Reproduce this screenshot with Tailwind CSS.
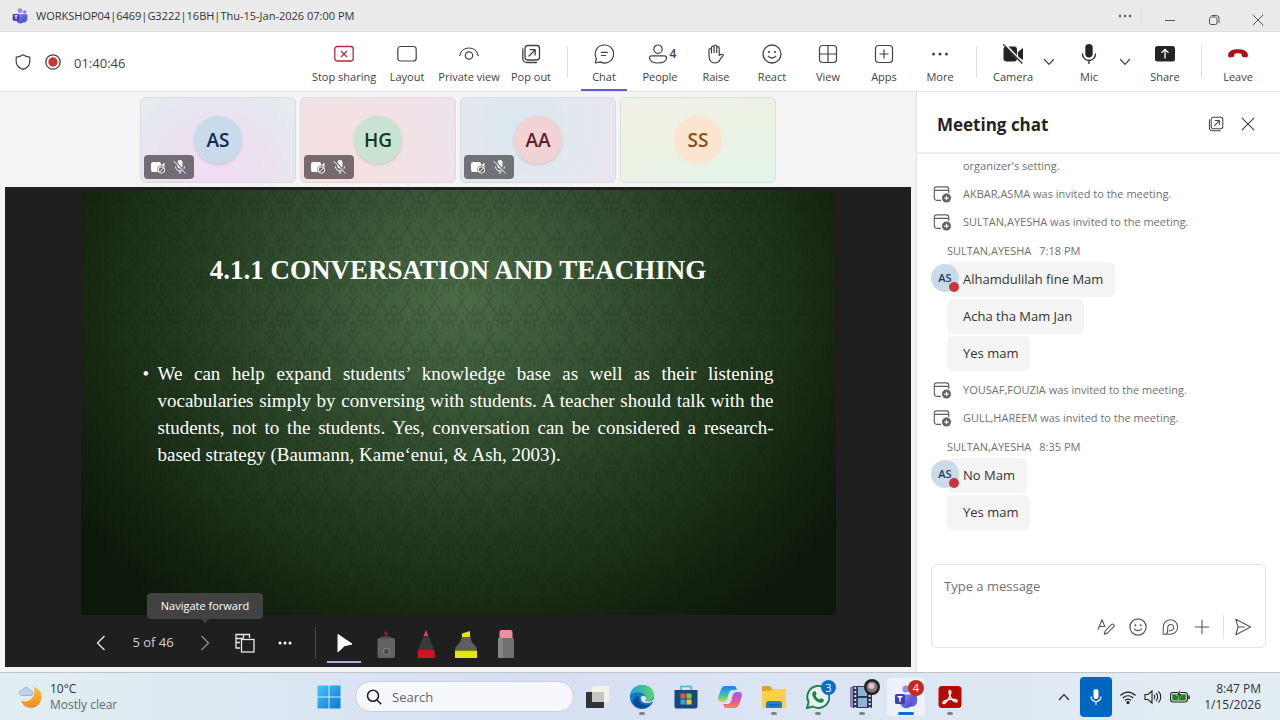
<!DOCTYPE html>
<html lang="en">
<head>
<meta charset="utf-8">
<meta name="viewport" content="width=device-width, initial-scale=1">
<title>Meeting</title>
<script src="https://cdn.jsdelivr.net/npm/@tailwindcss/browser@4"></script>
</head>
<body class="flex h-screen flex-col overflow-hidden bg-[#f4f4f4] font-['Open_Sans','Noto_Sans',sans-serif] text-[#424242]">

<svg width="0" height="0" class="absolute" aria-hidden="true">
  <defs>
    <linearGradient id="tm" x1="0" y1="0" x2="1" y2="1"><stop offset="0" stop-color="#8a8ff5"/><stop offset="1" stop-color="#4a3fc4"/></linearGradient>
    <symbol id="teams" viewBox="0 0 24 24">
      <circle cx="19" cy="6" r="2.6" fill="#7b83eb"/><circle cx="12" cy="4" r="3.6" fill="#8b90f0"/>
      <path d="M16 9.5h5.2c1 0 1.8.8 1.8 1.800v5.500a5 5 0 0 1-7 4.400z" fill="#5b5fd6"/>
      <path d="M7 9.500h10a1.500 1.500 0 0 1 1.500 1.500v6a6 6 0 0 1-12.500 0v-6.500a1 1 0 0 1 1-1z" fill="url(#tm)"/>
      <rect x="1" y="9" width="10" height="10" rx="1.800" fill="#3d3db4"/>
      <path d="M3.500 11.700h5M6 11.700v5" stroke="#fff" stroke-width="1.500" fill="none"/>
    </symbol>
    <symbol id="popout" viewBox="0 0 20 20">
      <g fill="none" stroke="currentColor" stroke-width="1.300" stroke-linecap="round" stroke-linejoin="round">
      <rect x="4" y="1.500" width="14.500" height="14.500" rx="2.800"/><path d="M1.800 4.800v9.700a4 4 0 0 0 4 4h9.700M8 12l6-6M9 5.700h5.200v5.200"/></g>
    </symbol>
    <symbol id="smile" viewBox="0 0 20 20">
      <circle cx="10" cy="10" r="9" fill="none" stroke="currentColor" stroke-width="1.300"/><circle cx="7" cy="8" r="1.100" fill="currentColor"/><circle cx="13" cy="8" r="1.100" fill="currentColor"/><path d="M6.200 12.200c1.800 2.400 5.800 2.400 7.600 0" fill="none" stroke="currentColor" stroke-width="1.300" stroke-linecap="round"/>
    </symbol>
    <symbol id="chev" viewBox="0 0 12 12"><path d="M1.500 3.500L6 8.300l4.500-4.800" fill="none" stroke="currentColor" stroke-width="1.200" stroke-linecap="round"/></symbol>
    <symbol id="close" viewBox="0 0 12 12"><path d="M.7.700l10.600 10.600M11.300.700L.7 11.300" fill="none" stroke="currentColor" stroke-width="1"/></symbol>
    <symbol id="invite" viewBox="0 0 20 20">
      <path d="M9 17H4A2.500 2.500 0 0 1 1.500 14.500v-10A2.500 2.500 0 0 1 4 2h11a2.500 2.500 0 0 1 2.500 2.500V9M1.500 6h16" fill="none" stroke="currentColor" stroke-width="1.300"/>
      <circle cx="15" cy="14.500" r="5" fill="currentColor"/><path d="M15 12v5M12.500 14.500h5" stroke="#fff" stroke-width="1.300"/>
    </symbol>
    <symbol id="camblock" viewBox="0 0 16 16">
      <rect x="1" y="3" width="10" height="10" rx="2" fill="#fff"/><path d="M11.500 6l3-2.300v6z" fill="#fff"/>
      <circle cx="11.500" cy="11" r="4.200" fill="#6b646b"/><circle cx="11.500" cy="11" r="3.200" fill="none" stroke="#fff"/><path d="M9.300 13.200l4.400-4.400" stroke="#fff"/>
    </symbol>
    <symbol id="micoff" viewBox="0 0 16 16">
      <rect x="5.500" y="1" width="5" height="8.500" rx="2.500" fill="#fff"/><path d="M3.500 7.500a4.500 4.500 0 0 0 9 0M8 12v3" stroke="#fff" fill="none"/>
      <path d="M2.500 1.500l12 13" stroke="#6b646b" stroke-width="1.600"/><path d="M1.700 2l12 12.500" stroke="#fff"/>
    </symbol>
  </defs>
</svg>

<header class="flex h-8 shrink-0 items-center border-b border-[#dfdfda] bg-[#eaeaea] pl-3">
  <svg class="size-4" aria-hidden="true"><use href="#teams"/></svg>
  <h1 class="ml-2 pt-0.5 text-[11px] text-[#333]">WORKSHOP04|6469|G3222|16BH|Thu-15-Jan-2026 07:00 PM</h1>
  <div class="ml-auto flex h-full items-center text-[#555]">
    <button aria-label="More options" class="flex h-full w-8 items-center justify-center"><svg class="h-1 w-4" viewBox="0 0 16 4" fill="currentColor"><circle cx="3" cy="2" r="1.200"/><circle cx="8" cy="2" r="1.200"/><circle cx="13" cy="2" r="1.200"/></svg></button>
    <span class="mr-1.5 h-4 w-px bg-[#dcdcdc]"></span>
    <button aria-label="Minimize" class="flex h-full w-11 items-center justify-center pt-2"><svg class="size-3" viewBox="0 0 12 12"><path d="M1 6.500h10" stroke="currentColor"/></svg></button>
    <button aria-label="Restore" class="flex h-full w-11 items-center justify-center pt-2"><svg class="size-3" viewBox="0 0 12 12" fill="none" stroke="currentColor"><rect x="1.500" y="3" width="7.500" height="7.500" rx="1.500"/><path d="M3.500 1.500h5a2.500 2.500 0 0 1 2.500 2.500v5"/></svg></button>
    <button aria-label="Close" class="flex h-full w-11 items-center justify-center pt-2"><svg class="size-3"><use href="#close"/></svg></button>
  </div>
</header>

<nav aria-label="Meeting controls" class="flex h-15 shrink-0 border-b border-[#e3e3e3] bg-white pr-3.5 pl-[15px] text-[11px] leading-4">
  <div class="flex items-center gap-3">
    <svg class="size-4" viewBox="0 0 16 16" fill="none" stroke="#424242" stroke-width="1.200" stroke-linejoin="round"><path d="M8 .8c2 1.500 4 2.200 6.800 2.400v4.300c0 3.800-2.500 6.300-6.800 7.900-4.300-1.600-6.800-4.100-6.800-7.900V3.200C4 3 6 2.300 8 .8z"/></svg>
    <svg class="ml-0.5 size-4" viewBox="0 0 16 16"><circle cx="8" cy="8" r="7.200" fill="none" stroke="#424242" stroke-width="1.300"/><circle cx="8" cy="8" r="4.700" fill="#d13438"/></svg>
    <time class="pt-0.5 pl-px text-[13px]">01:40:46</time>
  </div>
  <div class="ml-auto flex">
    <button class="flex w-18 flex-col items-center gap-[5px] whitespace-nowrap pt-3"><svg class="size-5" viewBox="0 0 20 20" fill="none" stroke="#b52a3a" stroke-width="1.300"><rect x=".8" y="2.500" width="18.400" height="14.500" rx="2.500"/><path d="M7 7l6 6M13 7l-6 6"/></svg><span>Stop sharing</span></button>
    <button class="flex w-13.5 flex-col items-center gap-[5px] pt-3"><svg class="size-5" viewBox="0 0 20 20" fill="none" stroke="currentColor" stroke-width="1.200"><rect x=".8" y="2.500" width="18.400" height="14.500" rx="2.800"/></svg><span>Layout</span></button>
    <button class="flex w-17.5 flex-col items-center gap-[5px] whitespace-nowrap pt-3"><svg class="size-5" viewBox="0 0 20 20" fill="none" stroke="currentColor" stroke-width="1.200" stroke-linecap="round"><path d="M.8 11.500C2.500 1.500 17.500 1.500 19.200 11.500"/><circle cx="10" cy="11.500" r="3.700"/></svg><span>Private view</span></button>
    <button class="flex w-13.5 flex-col items-center gap-[5px] whitespace-nowrap pt-3"><svg class="size-5"><use href="#popout"/></svg><span>Pop out</span></button>
    <div class="flex w-4.5 items-center justify-center"><span class="h-8 w-px bg-[#dedede]"></span></div>
    <button class="relative flex w-14 flex-col items-center gap-[5px] pt-3"><svg class="size-5" viewBox="0 0 20 20" fill="none" stroke="currentColor" stroke-width="1.200" stroke-linecap="round" stroke-linejoin="round"><path d="M10.500 1a9 9 0 1 1-4.200 16.900L1.300 19l1.100-4.500A9 9 0 0 1 10.500 1z"/><path d="M7.500 8.300h6M7.500 11.500h4"/></svg><span>Chat</span><span class="absolute bottom-0 h-0.5 w-11.5 bg-[#5b5fc7]"></span></button>
    <button class="flex w-14 flex-col items-center gap-[5px] pt-3"><span class="flex h-5 items-center gap-0.5 pl-1 text-[12px] font-semibold"><svg class="size-5" viewBox="0 0 20 20" fill="none" stroke="currentColor" stroke-width="1.200"><circle cx="10" cy="5.200" r="4.200"/><path d="M3.500 11.800h13a2 2 0 0 1 2 2c0 3.500-3.500 5.200-8.500 5.200s-8.500-1.700-8.500-5.200a2 2 0 0 1 2-2z"/></svg>4</span><span>People</span></button>
    <button class="flex w-14 flex-col items-center gap-[5px] pt-3"><svg class="size-5" viewBox="0 0 20 20" fill="none" stroke="currentColor" stroke-width="1.200" stroke-linecap="round" stroke-linejoin="round"><path d="M3 11V5.800a1.200 1.200 0 0 1 2.500 0V9 3.500a1.300 1.300 0 0 1 2.600 0V8.500 2.300a1.300 1.300 0 0 1 2.600 0V8.500 3.800a1.200 1.200 0 0 1 2.500 0V11.500c1-.8 2.200-1.400 3.600-1 .8.300.6 1 .1 1.400-1.300.9-2 2.300-3 4.100-1 2-2.400 3-5 3C5 19 3 16 3 11z"/></svg><span>Raise</span></button>
    <button class="flex w-14 flex-col items-center gap-[5px] pt-3"><svg class="size-5"><use href="#smile"/></svg><span>React</span></button>
    <button class="flex w-14 flex-col items-center gap-[5px] pt-3"><svg class="size-5" viewBox="0 0 20 20" fill="none" stroke="currentColor" stroke-width="1.200"><rect x="1.500" y="1.500" width="17" height="17" rx="3"/><path d="M10 1.500v17M1.500 10h17"/></svg><span>View</span></button>
    <button class="flex w-14 flex-col items-center gap-[5px] pt-3"><svg class="size-5" viewBox="0 0 20 20" fill="none" stroke="currentColor" stroke-width="1.200"><rect x="1.500" y="1.500" width="17" height="17" rx="3"/><path d="M10 5.500v9M5.500 10h9"/></svg><span>Apps</span></button>
    <button class="flex w-14 flex-col items-center gap-[5px] pt-3"><svg class="size-5" viewBox="0 0 20 20" fill="currentColor"><circle cx="3.500" cy="10" r="1.500"/><circle cx="10" cy="10" r="1.500"/><circle cx="16.500" cy="10" r="1.500"/></svg><span>More</span></button>
    <div class="flex w-[17px] items-center justify-center"><span class="h-8 w-px bg-[#dedede]"></span></div>
    <button class="flex w-14 flex-col items-center gap-[5px] pt-3"><svg class="size-5" viewBox="0 0 20 20"><rect x=".5" y="2.500" width="13.500" height="15" rx="3" fill="#242424"/><path d="M15 8l4-3.500q1-.5 1 .5v10q0 1-1 .5l-4-3z" fill="#242424"/><path d="M1.500 0l18.500 19.500" stroke="#fff" stroke-width="2.500"/><path d="M.3.500l19 19" stroke="#242424" stroke-width="1.300"/></svg><span>Camera</span></button>
    <button aria-label="Camera options" class="flex w-4 items-center justify-center"><svg class="size-3"><use href="#chev"/></svg></button>
    <button class="ml-1 flex w-14 flex-col items-center gap-[5px] pt-3"><svg class="size-5" viewBox="0 0 20 20"><rect x="6.300" y="0" width="7.400" height="13.500" rx="3.700" fill="#242424"/><path d="M3.500 9.500v.5a6.500 6.500 0 0 0 13 0v-.5M10 16.500V20" fill="none" stroke="#242424" stroke-width="1.300"/></svg><span>Mic</span></button>
    <button aria-label="Mic options" class="flex w-4 items-center justify-center"><svg class="size-3"><use href="#chev"/></svg></button>
    <button class="ml-1 flex w-14 flex-col items-center gap-[5px] pt-3"><svg class="size-5" viewBox="0 0 20 20"><rect x="0" y="2" width="20" height="15.500" rx="2.500" fill="#242424"/><path d="M10 14.500V5.500M6.500 8.800L10 5.300l3.500 3.500" stroke="#fff" stroke-width="1.300" fill="none"/></svg><span>Share</span></button>
    <div class="flex w-[17px] items-center justify-center"><span class="h-8 w-px bg-[#dedede]"></span></div>
    <button class="flex w-14 flex-col items-center gap-[5px] pt-3"><svg class="size-5" viewBox="0 0 20 20"><path d="M10 5.300c5.500 0 9.500 1.800 9.900 5.500.2 1.800-.6 2.900-2.100 2.600l-2.600-.5c-1-.2-1.500-.8-1.600-2l-.1-1.100c-2.200-.8-4.800-.8-7 0l-.1 1.100c-.1 1.200-.6 1.800-1.600 2l-2.600.5C.7 13.700-.1 12.600.1 10.800.5 7.100 4.500 5.300 10 5.300z" fill="#b10e1c"/></svg><span>Leave</span></button>
  </div>
</nav>

<main class="flex min-h-0 flex-1">
  <section aria-label="Shared content" class="flex min-w-0 flex-1 flex-col px-[5px] pb-[5px]">
    <ul class="flex shrink-0 justify-center gap-1 pt-[5px] pb-1">
      <li class="relative flex h-[86px] w-39 items-center justify-center rounded-md border border-[#dcdce0] bg-[radial-gradient(circle_at_50%_100%,#f3dcf5_0%,#ebe0ef_40%,#e5eaee_85%,#e4efee_100%)]">
        <span class="flex size-12 items-center justify-center rounded-full bg-[#c9dbea] text-[19px] font-semibold text-[#102a52] shadow-sm">AS</span>
        <span class="absolute bottom-[3px] left-[3px] flex h-6 w-[50px] items-center justify-center gap-1.5 rounded bg-[#736b76]"><svg class="size-4"><use href="#camblock"/></svg><svg class="size-4"><use href="#micoff"/></svg></span>
      </li>
      <li class="relative flex h-[86px] w-39 items-center justify-center rounded-md border border-[#e2d8de] bg-[radial-gradient(circle_at_25%_80%,#f6dee0_0%,#f2e1e4_45%,#ece2ee_100%)]">
        <span class="flex size-12 items-center justify-center rounded-full bg-[#cae3d2] text-[19px] font-semibold text-[#0f3d1c] shadow-sm">HG</span>
        <span class="absolute bottom-[3px] left-[3px] flex h-6 w-[50px] items-center justify-center gap-1.5 rounded bg-[#766a6e]"><svg class="size-4"><use href="#camblock"/></svg><svg class="size-4"><use href="#micoff"/></svg></span>
      </li>
      <li class="relative flex h-[86px] w-39 items-center justify-center rounded-md border border-[#d8dde2] bg-[radial-gradient(circle_at_40%_35%,#d9e6ee_0%,#e2e8ee_50%,#ebe5ee_100%)]">
        <span class="flex size-12 items-center justify-center rounded-full bg-[#f3d2d4] text-[19px] font-semibold text-[#5c1f2d] shadow-sm">AA</span>
        <span class="absolute bottom-[3px] left-[3px] flex h-6 w-[50px] items-center justify-center gap-1.5 rounded bg-[#6f7276]"><svg class="size-4"><use href="#camblock"/></svg><svg class="size-4"><use href="#micoff"/></svg></span>
      </li>
      <li class="relative flex h-[86px] w-39 items-center justify-center rounded-md border border-[#d9e2da] bg-linear-160 from-[#f3efe5] via-[#ebf2e3] to-[#dff5e8]">
        <span class="flex size-12 items-center justify-center rounded-full bg-[#fbe5d0] text-[19px] font-semibold text-[#835216]">SS</span>
      </li>
    </ul>
    <div class="flex min-h-0 flex-1 flex-col items-center bg-[#201f1f] pt-[3px]">
      <article class="relative flex min-h-0 w-5/6 flex-1 flex-col overflow-hidden bg-[radial-gradient(ellipse_62%_95%_at_50%_25%,#4b6b46_0%,#395736_25%,#253d22_55%,#172812_80%,#0c180a_100%)] px-[62px] font-['Liberation_Serif',serif] text-white">
        <svg class="absolute inset-0 size-full" aria-hidden="true">
          <defs><pattern id="damask" width="32" height="44" patternUnits="userSpaceOnUse" patternTransform="scale(.85)">
            <g fill="none" stroke="#0a180c" stroke-opacity=".16" stroke-width="2"><path d="M16 3c5 6 5 8 0 13-5-5-5-7 0-13zM16 16c7-5 12 0 9 5-2 3-6 1-5-2M16 16c-7-5-12 0-9 5 2 3 6 1 5-2M16 18v16M16 24c5-2 8 3 4 7M16 24c-5-2-8 3-4 7M0 22c4 5 4 9 0 14M32 22c-4 5-4 9 0 14M0 0c3 7 8 9 10 16M32 0c-3 7-8 9-10 16M0 44c3-5 3-7 9-9M32 44c-3-5-3-7-9-9"/></g>
          </pattern></defs>
          <rect width="100%" height="100%" fill="url(#damask)"/>
        </svg>
        <h2 class="relative mt-[64px] text-center text-[27px] leading-8 font-bold whitespace-nowrap">4.1.1 CONVERSATION AND TEACHING</h2>
        <ul class="relative mt-[74px] pl-[15px] text-[19px] leading-[27px]">
          <li class="text-justify before:absolute before:left-0 before:content-['•']">We can help expand students’ knowledge base as well as their listening vocabularies simply by conversing with students. A teacher should talk with the students, not to the students. Yes, conversation can be considered a research-based strategy (Baumann, Kame‘enui, &amp; Ash, 2003).</li>
        </ul>
      </article>
      <div class="relative flex h-[52px] w-full shrink-0 items-center pt-1 pl-20 text-[#e8e8e8]">
        <button aria-label="Navigate back" class="flex w-8 justify-center"><svg class="h-4 w-3" viewBox="0 0 12 16"><path d="M9.500 1L2.500 8l7 7" fill="none" stroke="currentColor" stroke-width="1.300"/></svg></button>
        <span class="w-18 text-center text-[13px] whitespace-nowrap text-[#d0d0d0]">5 of 46</span>
        <button aria-label="Navigate forward" aria-describedby="tip" class="relative flex w-8 justify-center text-[#8f8f93]"><svg class="h-4 w-3" viewBox="0 0 12 16"><path d="M2.500 1l7 7-7 7" fill="none" stroke="currentColor" stroke-width="1.300"/></svg>
          <span id="tip" role="tooltip" class="absolute bottom-8 left-1/2 flex h-[26px] w-29 -translate-x-1/2 items-center justify-center rounded bg-[#424242] text-[11px] whitespace-nowrap text-white after:absolute after:top-full after:size-0 after:border-4 after:border-b-0 after:border-transparent after:border-t-[#424242]">Navigate forward</span></button>
        <button aria-label="Grid view" class="ml-2 flex w-8 justify-center"><svg class="size-5" viewBox="0 0 20 20" fill="none" stroke="currentColor" stroke-width="1.300"><rect x="6.500" y="6.500" width="12.500" height="12.500"/><path d="M8.500 5.500V1.500H1v13.500h4M1 5.500h7M9 1.500h5.500V5M1 9.500h4"/></svg></button>
        <button aria-label="More actions" class="ml-2 flex w-8 justify-center"><svg class="h-1 w-4" viewBox="0 0 16 4" fill="#fff"><circle cx="3" cy="2" r="1.500"/><circle cx="8" cy="2" r="1.500"/><circle cx="13" cy="2" r="1.500"/></svg></button>
        <span class="mx-3.5 h-8 w-px bg-[#4d4d4d]"></span>
        <button aria-label="Cursor" class="relative flex h-full w-7 items-center justify-center"><svg class="size-5" viewBox="0 0 20 20"><path d="M4 1.500l14 9.500-7.500 1.700L4 19z" fill="#fff" stroke="#fff" stroke-linejoin="round"/></svg><span class="absolute bottom-1 h-0.5 w-8.5 bg-[#b3addc]"></span></button>
        <button aria-label="Laser pointer" class="ml-3.5 flex w-7 justify-center pt-0.5"><svg class="h-8 w-6" viewBox="0 0 24 32"><circle cx="12" cy="5.500" r="2" fill="#8c1d26"/><path d="M12 7v3" stroke="#6c1d26" stroke-width="2"/><rect x="3.500" y="10" width="17.500" height="20" rx="2" fill="#636363"/><rect x="7" y="8.500" width="10" height="2" fill="#4d4d4d"/><circle cx="12.500" cy="23.500" r="3.200" fill="#4a4a4a" stroke="#8d8d8d"/></svg></button>
        <button aria-label="Pen" class="ml-3 flex w-7 justify-center pt-0.5"><svg class="h-8 w-6" viewBox="0 0 24 32"><path d="M9.500 8.500q2.500-2 5 0c3 6 5 10 5.500 15H4c.5-5 2.500-9 5.500-15z" fill="#3a3a3a"/><path d="M12 2l2.500 6h-5z" fill="#e0414b"/><path d="M4 22h16.500l.5 8H3.500z" fill="#c8161f"/></svg></button>
        <button aria-label="Highlighter" class="ml-3 flex w-7 justify-center pt-0.5"><svg class="h-8 w-6" viewBox="0 0 24 32"><path d="M8 5.500L16 3v6.500H8z" fill="#e3e31c"/><path d="M7.500 9h9q0 4 3 7 3 2 3.500 6H1q.5-4 3.500-6 3-3 3-7z" fill="#5e5e5e"/><path d="M1 22.500h22V30H1z" fill="#e6e60f"/></svg></button>
        <button aria-label="Eraser" class="ml-3 flex w-7 justify-center pt-0.5"><svg class="h-8 w-6" viewBox="0 0 24 32"><rect x="5.500" y="2" width="13" height="10" rx="2" fill="#ee8e99"/><rect x="4" y="10" width="16" height="20" rx="1" fill="#717171"/><path d="M4 10h5v20H4z" fill="#858585"/></svg></button>
      </div>
    </div>
  </section>

  <aside aria-label="Meeting chat" class="flex w-91 shrink-0 flex-col border-l border-[#e0e0e0] bg-white">
    <header class="flex h-[62px] shrink-0 items-center border-b-2 border-[#efefef] pt-1 pr-[25px] pl-5">
      <h2 class="pt-px text-[17px] font-bold text-[#242424]">Meeting chat</h2>
      <button aria-label="Pop out chat" class="ml-auto"><svg class="size-4"><use href="#popout"/></svg></button>
      <button aria-label="Close chat" class="ml-[17px]"><svg class="size-3.5"><use href="#close"/></svg></button>
    </header>
    <div class="min-h-0 flex-1 overflow-hidden pl-3.5 text-[11px] text-[#707070]">
      <p class="-mt-0.5 flex h-7 items-center pl-8">organizer's setting.</p>
      <p class="flex h-7 items-center gap-3"><svg class="ml-0.5 size-4.5 text-[#616161]"><use href="#invite"/></svg>AKBAR,ASMA was invited to the meeting.</p>
      <p class="flex h-7 items-center gap-3"><svg class="ml-0.5 size-4.5 text-[#616161]"><use href="#invite"/></svg>SULTAN,AYESHA was invited to the meeting.</p>
      <p class="flex h-[26px] items-center gap-2 pt-1 pl-4"><span>SULTAN,AYESHA</span><time>7:18 PM</time></p>
      <div class="relative flex flex-col items-start gap-0.5 pl-4 text-[13px] text-[#333]">
        <p class="flex h-[35px] items-center rounded-md bg-[#f4f4f4] pr-3 pl-4">Alhamdulilah fine Mam</p>
        <p class="flex h-[35px] items-center rounded-md bg-[#f4f4f4] pr-3 pl-4">Acha tha Mam Jan</p>
        <p class="flex h-[35px] items-center rounded-md bg-[#f4f4f4] pr-3 pl-4">Yes mam</p>
        <span class="absolute top-0.5 left-0 flex size-7 items-center justify-center rounded-full bg-[#c9dbea] text-[11px] font-semibold text-[#1d3a5f]">AS<i class="absolute right-0 bottom-0 size-2.5 rounded-full bg-[#c9353b]"></i></span>
      </div>
      <p class="mt-[5px] flex h-7 items-center gap-3"><svg class="ml-0.5 size-4.5 text-[#616161]"><use href="#invite"/></svg>YOUSAF,FOUZIA was invited to the meeting.</p>
      <p class="flex h-7 items-center gap-3"><svg class="ml-0.5 size-4.5 text-[#616161]"><use href="#invite"/></svg>GULL,HAREEM was invited to the meeting.</p>
      <p class="flex h-[26px] items-center gap-2 pt-1 pl-4"><span>SULTAN,AYESHA</span><time>8:35 PM</time></p>
      <div class="relative flex flex-col items-start gap-0.5 pl-4 text-[13px] text-[#333]">
        <p class="flex h-[35px] items-center rounded-md bg-[#f4f4f4] pr-3 pl-4">No Mam</p>
        <p class="flex h-[35px] items-center rounded-md bg-[#f4f4f4] pr-3 pl-4">Yes mam</p>
        <span class="absolute top-0.5 left-0 flex size-7 items-center justify-center rounded-full bg-[#c9dbea] text-[11px] font-semibold text-[#1d3a5f]">AS<i class="absolute right-0 bottom-0 size-2.5 rounded-full bg-[#c9353b]"></i></span>
      </div>
    </div>
    <form class="mr-3.5 mb-6 ml-3.5 flex h-21 shrink-0 flex-col rounded-md border border-[#e2e2e2]">
      <input type="text" aria-label="Type a message" placeholder="Type a message" class="h-[42px] w-full px-3 text-[13px] outline-none placeholder:text-[#707070]">
      <div class="flex h-10 items-center justify-end gap-3.5 pr-[13px] text-[#555]">
        <button type="button" aria-label="Format"><svg class="size-4.5" viewBox="0 0 20 20" fill="none" stroke="currentColor" stroke-width="1.200" stroke-linejoin="round"><path d="M1 13L5.500 2 9 10M2.500 9.500h5.500M8 18l1-3.500 7-7.200a1.700 1.700 0 0 1 2.500 2.500l-7 7z"/></svg></button>
        <button type="button" aria-label="Emoji"><svg class="size-4.5"><use href="#smile"/></svg></button>
        <button type="button" aria-label="Loop"><svg class="size-4.5" viewBox="0 0 20 20" fill="none" stroke="currentColor" stroke-width="1.200" stroke-linejoin="round"><path d="M2.500 18V10A8 8 0 1 1 10.500 18zM6 18c1.500-2 1.500-5 1.500-7.500a3.300 3.300 0 1 1 3.300 3.300c-1.500 0-2 .2-2 1.200"/></svg></button>
        <button type="button" aria-label="Add"><svg class="size-4.5" viewBox="0 0 20 20"><path d="M10 2v16M2 10h16" stroke="currentColor" stroke-width="1.200"/></svg></button>
        <span class="-mr-1 -ml-0.5 h-6 w-px bg-[#e0e0e0]"></span>
        <button type="submit" aria-label="Send"><svg class="size-4.5" viewBox="0 0 20 20" fill="none" stroke="currentColor" stroke-width="1.200" stroke-linejoin="round"><path d="M2 1.500l16.500 8.500L2 18.500 4.500 10zM4.500 10h7.500"/></svg></button>
      </div>
    </form>
  </aside>
</main>

<footer class="flex h-12 shrink-0 items-center border-t border-[#bfc4ca] bg-linear-to-r from-[#e1eff1] via-[#d6dff3] via-40% to-[#e3eef3] text-[12px] leading-4">
  <div class="flex flex-1 items-center gap-2 pl-[18px]">
    <svg class="size-6" viewBox="0 0 24 24"><defs><linearGradient id="mo" x1="0" y1="0" x2="0" y2="1"><stop offset="0" stop-color="#fbc04a"/><stop offset="1" stop-color="#ee8b1c"/></linearGradient></defs><path d="M16 2c9 2 10 14 3 19-6 4-14 1-16-5 9 2 15-4 13-14z" fill="url(#mo)"/><path d="M4 10.500c-4-.5-3.500-5.500.5-5.200 1.500-4 7-3.500 7.500.5 4 0 3.500 4.700 0 4.700z" fill="#bdd3f0" stroke="#89a6d3" stroke-width=".8"/></svg>
    <div><p class="text-[#333]">10°C</p><p class="text-[#606870]">Mostly clear</p></div>
  </div>
  <div class="flex h-full items-center pl-2.5">
    <button aria-label="Start"><svg class="size-6" viewBox="0 0 24 24"><defs><linearGradient id="wn" x1="0" y1="0" x2="1" y2="1"><stop offset="0" stop-color="#43c6f8"/><stop offset="1" stop-color="#0a78d4"/></linearGradient></defs><path d="M.5.500h11v11H.5zM12.500.500h11v11h-11zM.5 12.500h11v11H.5zM12.500 12.500h11v11h-11z" fill="url(#wn)"/></svg></button>
    <label class="mr-0.5 ml-3.5 flex h-[31px] w-[219px] items-center gap-2.5 rounded-full border border-[#c9d0df] bg-[#f6f8fd] pl-2.5"><svg class="size-4" viewBox="0 0 16 16" fill="none" stroke="#222" stroke-width="1.600"><circle cx="7" cy="6.800" r="5.500"/><path d="M11 11l4.300 4.300"/></svg><input type="text" aria-label="Search" placeholder="Search" class="w-40 text-[13px] outline-none placeholder:text-[#5f646b]"></label>
    <div class="flex h-full items-center">
      <button aria-label="Task view" class="flex h-full w-11 items-center justify-center"><svg class="size-6" viewBox="0 0 24 24"><rect x="6" y="1" width="17" height="16" rx="1.500" fill="#f3f1ec"/><rect x="0" y="7" width="18" height="16" rx="1" fill="#333"/><path d="M6 7h12v10H6z" fill="#c5c5c3"/></svg></button>
      <button aria-label="Edge" class="relative flex h-full w-11 items-center justify-center"><svg class="size-6" viewBox="0 0 24 24"><defs><linearGradient id="eg" x1="0" y1="0" x2="1" y2="0"><stop offset="0" stop-color="#239fe0"/><stop offset="1" stop-color="#5ed66a"/></linearGradient></defs><circle cx="12" cy="12" r="12" fill="#1377c8"/><path d="M0 11C1-3 23-4 24 10c0 5-4 7-9 6 2-2 2-5-1-7-5-3-13-1-14 2z" fill="url(#eg)"/><path d="M9 11c-2 6 4 11 12 8-4 5-11 6-16 2-3-4-2-9 4-10z" fill="#0c4a9c"/><path d="M11 12c-1.500 5 5 8.500 13 4v-2c-2 2.500-6 3-9 2 2-1.500 1.500-4.500-.5-5-1.500-.4-3 0-3.500 1z" fill="#dbe3f4"/></svg><i class="absolute bottom-[5px] h-[3px] w-1.5 rounded-full bg-[#7e838c]"></i></button>
      <button aria-label="Store" class="flex h-full w-11 items-center justify-center"><svg class="size-6" viewBox="0 0 24 24"><path d="M7 5V1.500h10V5" fill="none" stroke="#41b6e6" stroke-width="1.600"/><path d="M.5 5h23v16a2.500 2.500 0 0 1-2.500 2.500H3A2.500 2.500 0 0 1 .5 21z" fill="#164a7c"/><path d="M6.500 8.500h5v5h-5z" fill="#f2562c"/><path d="M12.500 8.500h5v5h-5z" fill="#8cc63e"/><path d="M6.500 14.500h5v5h-5z" fill="#29a9e8"/><path d="M12.500 14.500h5v5h-5z" fill="#fcc42a"/></svg></button>
      <button aria-label="Copilot" class="flex h-full w-11 items-center justify-center"><svg class="size-6" viewBox="0 0 24 24"><defs><linearGradient id="ca" x1="0" y1="0" x2="0" y2="1"><stop offset="0" stop-color="#1f80e8"/><stop offset=".6" stop-color="#3cc3b0"/><stop offset="1" stop-color="#e8d13a"/></linearGradient><linearGradient id="cb" x1="0" y1="0" x2="0" y2="1"><stop offset="0" stop-color="#9a5df0"/><stop offset=".6" stop-color="#e9559b"/><stop offset="1" stop-color="#fb8b4a"/></linearGradient></defs><path d="M7 1h9c2 0 2 2 3 4h-4c-3 0-4 2-5 6s-2 6-5 6H3c-4 0-3-4-2-7C3 4 4 1 7 1z" fill="url(#ca)"/><path d="M17 23H8c-2 0-2-2-3-4h4c3 0 4-2 5-6s2-6 5-6h2c4 0 3 4 2 7-2 6-3 9-6 9z" fill="url(#cb)"/></svg></button>
      <button aria-label="File Explorer" class="relative flex h-full w-11 items-center justify-center"><svg class="size-6" viewBox="0 0 24 24"><path d="M0 2.500a1.500 1.500 0 0 1 1.500-1.500H8l2.500 3H24v5H0z" fill="#e0a021"/><path d="M0 6h8l2-2h13a1 1 0 0 1 1 1v17a1 1 0 0 1-1 1H1a1 1 0 0 1-1-1z" fill="#fbd04d"/><path d="M4 23v-4a3 3 0 0 1 3-3h10a3 3 0 0 1 3 3v4z" fill="#1f80cf"/><path d="M7 20h10" stroke="#0c5ca0" stroke-width="1.500"/></svg><i class="absolute bottom-[5px] h-[3px] w-1.5 rounded-full bg-[#7e838c]"></i></button>
      <button aria-label="WhatsApp" class="relative flex h-full w-11 items-center justify-center"><svg class="size-6" viewBox="0 0 24 24"><path d="M1 23l1.600-6A11 11 0 1 1 7 21.500z" fill="#e9f2ee" stroke="#1d8450" stroke-width="2"/><path d="M7.500 6.500c1-1 1.800-.6 2.200.3l.8 2c.2.500-1 1.500-.8 2 .8 1.700 2 2.800 3.800 3.600.6.200 1.300-1.400 1.900-1.200l2 1c.8.400.6 1.400 0 2.200-2.400 2.700-6 .6-8.200-1.500-2.300-2.300-4.300-6-1.700-8.400z" fill="#1d8450"/></svg><span class="absolute top-[7px] right-1 flex size-[15px] items-center justify-center rounded-full bg-[#0b6fc9] text-[11px] text-white">3</span><i class="absolute bottom-[5px] h-[3px] w-1.5 rounded-full bg-[#7e838c]"></i></button>
      <button aria-label="Screen recorder" class="relative flex h-full w-11 items-center justify-center"><svg class="size-6" viewBox="0 0 24 24"><path d="M0 2l4-1v22l-4-1z" fill="#8d82c4"/><path d="M3 1h19v22H3z" fill="#34384c"/><path d="M8 2h9v9H8zM8 13h9v9H8z" fill="#8fb3da"/><path d="M5.300 2v21M19.700 2v21" stroke="#e1e6ef" stroke-width="1.800" stroke-dasharray="2 2"/></svg><svg class="absolute top-1.5 right-1 size-4" viewBox="0 0 16 16"><circle cx="8" cy="8" r="8" fill="#222"/><circle cx="8" cy="8" r="5.500" fill="#8b7878"/><circle cx="7.500" cy="7" r="3" fill="#d9c6c3"/></svg><i class="absolute bottom-[5px] h-[3px] w-1.5 rounded-full bg-[#7e838c]"></i></button>
      <button aria-label="Teams" class="relative flex h-full w-11 items-center justify-center"><span class="flex size-[38px] items-center justify-center rounded bg-[#edf1fb]"><svg class="size-6"><use href="#teams"/></svg></span><span class="absolute top-[7px] right-1 flex size-4 items-center justify-center rounded-full bg-[#c42b1c] text-[11px] text-white">4</span><i class="absolute bottom-[5px] h-[3px] w-4 rounded-full bg-[#0b6fc9]"></i></button>
      <button aria-label="Acrobat" class="relative flex h-full w-11 items-center justify-center"><svg class="size-6" viewBox="0 0 24 24"><rect x=".5" y="1" width="23" height="22" rx="3.500" fill="#b30b00"/><path d="M11.500 5.500c2.500-.5 1 5-1.500 9-2 3.500-4.500 5-5 3.500s4-3.300 8-3.700c4-.3 6.500.8 6 2-.8 1.500-4-.3-6-3.300-1.800-3-2.700-7-1.500-7.500z" fill="none" stroke="#fff" stroke-width="1.400"/></svg><i class="absolute bottom-[5px] h-[3px] w-1.5 rounded-full bg-[#7e838c]"></i></button>
    </div>
  </div>
  <div class="flex flex-1 items-center justify-end pr-[19px] text-[#222]">
    <button aria-label="Show hidden icons"><svg class="size-3 rotate-180"><use href="#chev"/></svg></button>
    <button aria-label="Microphone in use" class="ml-2.5 flex h-10 w-8 items-center justify-center rounded bg-[#0067c0]"><svg class="size-4" viewBox="0 0 16 16"><rect x="5.500" y="0" width="5" height="10" rx="2.500" fill="#fff"/><path d="M3 7.500a5 5 0 0 0 10 0M8 12.500V16" stroke="#fff" stroke-width="1.200" fill="none"/></svg></button>
    <svg class="ml-2 size-4" viewBox="0 0 16 16" fill="none" stroke="#222" stroke-width="1.200"><path d="M.5 6.500c4.500-4.500 10.500-4.500 15 0M2.800 9c3-3 7.400-3 10.400 0M5 11.500c1.700-1.800 4.300-1.800 6 0"/><circle cx="8" cy="13.500" r="1" fill="#222"/></svg>
    <svg class="ml-2 h-4 w-4.5" viewBox="0 0 18 16" fill="none" stroke="#222" stroke-width="1.100"><path d="M1 5.500h3L8 2v12L4 10.500H1zM10 6c1 1 1 3 0 4M12 4c2.200 2 2.200 6 0 8M14.500 2.300c3 3 3 8.400 0 11.400"/></svg>
    <svg class="ml-2 h-4 w-5" viewBox="0 0 20 16"><rect x=".6" y="3.500" width="16.800" height="9.500" rx="2.500" fill="#dff0e0" stroke="#222" stroke-width="1.100"/><rect x="2.300" y="5.200" width="13.500" height="6.200" rx="1" fill="#17851c"/><path d="M19 6.500v3.500" stroke="#222" stroke-width="1.500"/><path d="M10.500 0L6.500 6.500H9L8 11l4.500-6H9.800z" fill="#222" stroke="#e3eef3" stroke-width=".5"/></svg>
    <div class="ml-3.5 text-right text-[#333]"><p>8:47 PM</p><p>1/15/2026</p></div>
  </div>
</footer>
</body>
</html>
